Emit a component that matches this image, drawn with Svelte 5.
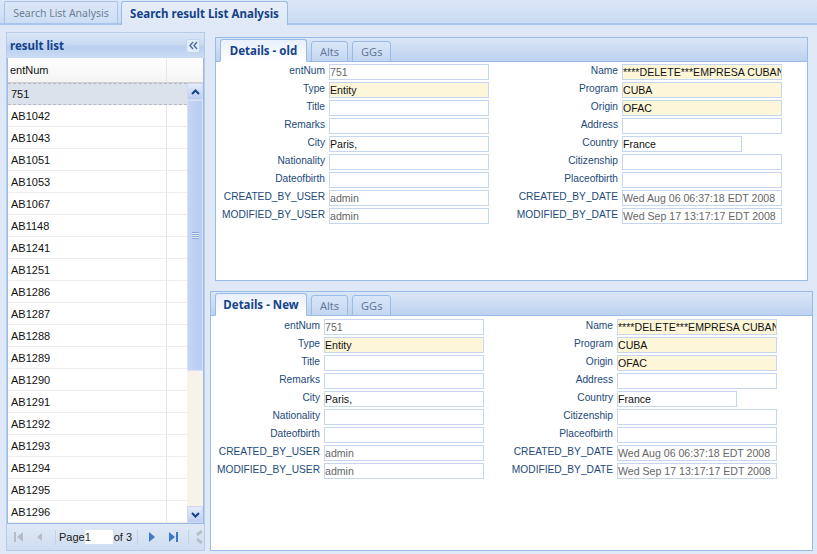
<script>
  const rows = ['751','AB1042','AB1043','AB1051','AB1053','AB1067','AB1148','AB1241','AB1251','AB1286','AB1287','AB1288','AB1289','AB1290','AB1291','AB1292','AB1293','AB1294','AB1295','AB1296'];
  const left = [
    ['entNum','751','ro'],['Type','Entity','req'],['Title','',''],['Remarks','',''],['City','Paris,',''],
    ['Nationality','',''],['Dateofbirth','',''],['CREATED_BY_USER','admin','ro'],['MODIFIED_BY_USER','admin','ro']
  ];
  const right = [
    ['Name','****DELETE***EMPRESA CUBANA','req'],['Program','CUBA','req'],['Origin','OFAC','req'],['Address','',''],['Country','France','short'],
    ['Citizenship','',''],['Placeofbirth','',''],['CREATED_BY_DATE','Wed Aug 06 06:37:18 EDT 2008','ro'],['MODIFIED_BY_DATE','Wed Sep 17 13:17:17 EDT 2008','ro']
  ];
  const panels = [
    { title: 'Details - old', cls: 'old' },
    { title: 'Details - New', cls: 'new' }
  ];
</script>

<div class="page">
  <div class="toptabs">
    <div class="ttab">Search List Analysis</div>
    <div class="ttab active">Search result List Analysis</div>
  </div>
  <div class="main">
    <aside class="side">
      <div class="sidehead">
        <span>result list</span>
        <button class="collapse" aria-label="collapse">
          <svg width="11" height="9" viewBox="0 0 11 9"><path d="M5 1 L2 4.5 L5 8 M9 1 L6 4.5 L9 8" fill="none" stroke="#4a6fa5" stroke-width="1.4"/></svg>
        </button>
      </div>
      <div class="grid">
        <div class="ghead"><div class="c1">entNum</div><div class="c2"></div></div>
        <div class="gbody">
          <div class="rows">
            {#each rows as r, i}
              <div class="row" class:sel={i === 0}><div class="c1">{r}</div><div class="c2"></div></div>
            {/each}
          </div>
          <div class="scroll">
            <div class="sbtn">
              <svg width="9" height="6" viewBox="0 0 9 6"><path d="M1 5 L4.5 1.5 L8 5" fill="none" stroke="#15428b" stroke-width="2"/></svg>
            </div>
            <div class="thumb"><i></i></div>
            <div class="track"></div>
            <div class="sbtn">
              <svg width="9" height="6" viewBox="0 0 9 6"><path d="M1 1 L4.5 4.5 L8 1" fill="none" stroke="#15428b" stroke-width="2"/></svg>
            </div>
          </div>
        </div>
      </div>
      <div class="pager">
        <svg class="pi first" width="12" height="12" viewBox="0 0 12 12"><rect x="1" y="1" width="2" height="10" fill="#b4bcc8"/><path d="M10 1 V11 L4 6 Z" fill="#b4bcc8"/></svg>
        <svg class="pi prev" width="8" height="12" viewBox="0 0 8 12"><path d="M7 2 V10 L2 6 Z" fill="#b4bcc8"/></svg>
        <span class="sep"></span>
        <span class="pl">Page</span><span class="pin">1</span><span class="pl of">of 3</span>
        <span class="sep s2"></span>
        <svg class="pi next" width="8" height="12" viewBox="0 0 8 12"><path d="M1 1 V11 L7 6 Z" fill="#3f78c8"/></svg>
        <svg class="pi last" width="12" height="12" viewBox="0 0 12 12"><path d="M1 1 V11 L7 6 Z" fill="#3f78c8"/><rect x="8" y="1" width="2" height="10" fill="#3f78c8"/></svg>
        <span class="sep s3"></span>
        <svg class="pi ref" width="8" height="14" viewBox="0 0 8 14"><path d="M7 1 L2 5 M2 9 L7 13" fill="none" stroke="#b8bfc8" stroke-width="3"/></svg>
      </div>
    </aside>

    <div class="content">
      {#each panels as p}
        <section class="panel {p.cls}">
          <div class="ptabs">
            <div class="ptab active">{p.title}</div>
            <div class="ptab">Alts</div>
            <div class="ptab">GGs</div>
          </div>
          <div class="pbody">
            <div class="form">
              {#each [left, right] as col}
                <div class="col">
                  {#each col as f}
                    <label class="lab">{f[0]}</label>
                    <div class="inp {f[2]}"><span>{f[1]}</span></div>
                  {/each}
                </div>
              {/each}
            </div>
          </div>
        </section>
      {/each}
    </div>
  </div>
</div>

<style>
  :global(body) { margin: 0; }
  .page { width: 817px; height: 554px; overflow: hidden; background: #dfe8f6; font-family: "Noto Sans", "Liberation Sans", sans-serif; font-size: 11px; color: #15428b; display: flex; flex-direction: column; }
  .toptabs { height: 25px; flex: none; box-sizing: border-box; display: flex; align-items: flex-end; gap: 3px; padding-left: 4px; border-bottom: 2px solid #a9c5ec; background: linear-gradient(#dbe7f7, #cbdcf3); }
  .ttab { height: 22px; box-sizing: border-box; width: 114px; display: flex; align-items: center; justify-content: center; border: 1px solid #a9c2e6; border-bottom: 0; border-radius: 2px 2px 0 0; background: linear-gradient(#dbe7f7, #cddef4); color: #6f8098; font-size: 10.5px; }
  .ttab.active { width: 167px; height: 24px; margin-bottom: -2px; background: linear-gradient(#e6eefa, #dfe8f6); border-color: #99bbe8; color: #15428b; font-weight: 700; font-size: 11.5px; border-radius: 3px 3px 0 0; }
  .main { flex: 1; display: flex; min-height: 0; padding: 7px 4px 3px 6px; gap: 5px; }
  .side { width: 199px; height: 519px; box-sizing: border-box; flex: none; border: 1px solid #b5cbe8; display: flex; flex-direction: column; background: #d0def0; }
  .sidehead { height: 25px; flex: none; display: flex; align-items: center; justify-content: space-between; padding: 0 4px 0 3px; background: linear-gradient(#dae6f6 0, #c9daf2 45%, #b9cfee 55%, #cbdcf3 100%); font-weight: 700; color: #15428b; font-size: 11.5px; }
  .collapse { width: 14px; height: 14px; padding: 0; border: 1px solid #c3d5ee; background: #e3ecf9; border-radius: 2px; display: flex; align-items: center; justify-content: center; }
  .grid { margin: 0; flex: none; display: flex; flex-direction: column; border: 1px solid #99bbe8; border-top: 0; background: #fff; color: #111; }
  .ghead { height: 25px; box-sizing: border-box; flex: none; display: flex; background: linear-gradient(#fff, #f4f4f4); border-bottom: 1px solid #d0d0d0; font-family: "Liberation Sans", sans-serif; }
  .ghead .c2 { flex: 1; }
  .c1 { width: 159px; box-sizing: border-box; padding-left: 2px; border-right: 1px solid #e6e6e6; display: flex; align-items: center; }
  .row .c1 { padding-left: 3px; }
  .c2 { width: 19px; }
  .gbody { height: 440px; flex: none; display: flex; overflow: hidden; }
  .rows { width: 179px; flex: none; font-family: "Liberation Sans", sans-serif; }
  .row { height: 22px; box-sizing: border-box; display: flex; border-bottom: 1px solid #ededed; }
  .row.sel { background: #dce2ec; border-top: 1px dashed #b4b9c4; border-bottom: 1px dashed #b4b9c4; }
  .row.sel .c1 { border-right-color: #dce2ec; }
  .scroll { flex: 1; display: flex; flex-direction: column; background: #f7f3e8; }
  .sbtn { height: 17px; flex: none; background: linear-gradient(#e4ecfa, #bccdf0); border: 1px solid #cfdaf0; box-sizing: border-box; display: flex; align-items: center; justify-content: center; }
  .thumb { height: 271px; flex: none; background: linear-gradient(90deg, #c5d4f3, #b9ccf2); border: 1px solid #d8e2f5; box-sizing: border-box; display: flex; align-items: center; justify-content: center; }
  .thumb i { width: 7px; height: 7px; background: repeating-linear-gradient(#8ea6d4 0 1px, #e4ecfa 1px 2px); }
  .track { flex: 1; }
  .pager { height: 26px; flex: none; display: flex; align-items: center; padding-left: 6px; background: linear-gradient(#dfe8f6, #cfddf1); color: #222; overflow: hidden; font-family: "Liberation Sans", sans-serif; font-size: 11px; }
  .pi { flex: none; }
  .prev { margin-left: 10px; }
  .sep { width: 1px; height: 15px; background: #c2d1e6; margin-left: 12px; flex: none; }
  .pl { margin-left: 3px; }
  .of { margin-left: 1px; }
  .pin { width: 28px; height: 14px; line-height: 14px; background: #fff; flex: none; color: #333; }
  .s2 { margin-left: 5px; }
  .next { margin-left: 10px; }
  .last { margin-left: 12px; }
  .s3 { margin-left: 8px; }
  .ref { margin-left: 6px; }
  .content { flex: 1; display: flex; flex-direction: column; gap: 10px; min-width: 0; }
  .panel { display: flex; flex-direction: column; box-sizing: border-box; }
  .panel.old { height: 244px; margin: 5px 5px 0 5px; }
  .panel.new { height: 260px; }
  .ptabs { height: 25px; flex: none; box-sizing: border-box; border: 1px solid #99bbe8; display: flex; align-items: flex-end; gap: 4px; padding-left: 4px; background: linear-gradient(#dae6f6, #bdd2ef); }
  .ptab { height: 21px; margin-bottom: -1px; box-sizing: border-box; padding: 0 8px; display: flex; align-items: center; border: 1px solid #99bbe8; border-radius: 3px 3px 0 0; background: linear-gradient(#d9e6f7, #c4d7f1); color: #64799b; }
  .ptab.active { height: 23px; width: 87px; justify-content: center; padding: 0; background: linear-gradient(#e8f0fb, #fff); border-bottom-color: #fff; color: #15428b; font-weight: 700; font-size: 11.5px; }
  .new .ptab.active { width: 92px; }
  .pbody { flex: 1; border: 1px solid #99bbe8; border-top: 0; background: #fff; padding-top: 2px; }
  .new .pbody { padding-top: 3px; }
  .form { display: flex; }
  .col { display: grid; grid-template-columns: 109px 160px; column-gap: 4px; row-gap: 2px; grid-auto-rows: 16px; }
  .col:first-child { width: 293px; flex: none; }
  .lab { text-align: right; line-height: 13px; color: #234a7a; white-space: nowrap; font-size: 10.2px; font-family: "Liberation Sans", sans-serif; }
  .inp { height: 16px; box-sizing: border-box; border: 1px solid #c5d6ee; background: #fff; overflow: hidden; white-space: nowrap; color: #111; font-family: "Liberation Sans", sans-serif; font-size: 10.6px; line-height: 15px; padding-left: 0; }
  .inp.ro span { color: #666; }
  .inp.req { background: #fdf6d8; }
  .inp.short { width: 120px; }
</style>
